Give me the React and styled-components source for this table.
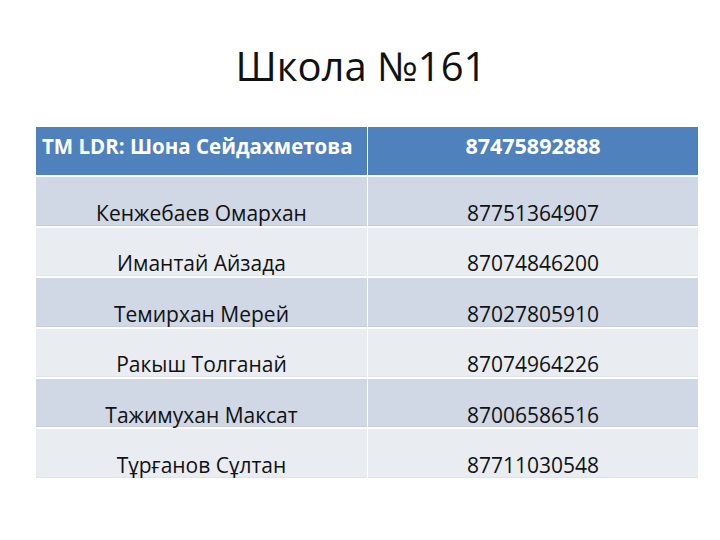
import { Fragment } from "react";
import styled, { createGlobalStyle } from "styled-components";

const GlobalStyle = createGlobalStyle`
  html, body {
    margin: 0;
    padding: 0;
    background: #ffffff;
  }
  body {
    font-family: "Open Sans", "Liberation Sans", sans-serif;
  }
`;

const Slide = styled.div`
  width: 720px;
  height: 540px;
  background: #ffffff;
  display: flex;
  flex-direction: column;
  align-items: center;
  padding-top: 41px;
  box-sizing: border-box;
`;

const Title = styled.h1`
  margin: 0 0 36px 0;
  font-size: 40px;
  line-height: 50px;
  font-weight: 400;
  color: #111111;
  padding-left: 2px;
`;

const Table = styled.div`
  width: 662px;
  margin-left: 14px;
  display: grid;
  grid-template-columns: 331px 330px;
  grid-auto-rows: 48.4px;
  column-gap: 1px;
  row-gap: 2px;
  background: #ffffff;
`;

const HeadCell = styled.div`
  background: #4f81bd;
  color: #ffffff;
  font-weight: 700;
  font-size: ${(p) => (p.$left ? "20.5px" : "21.5px")};
  display: flex;
  align-items: center;
  justify-content: ${(p) => (p.$left ? "flex-start" : "center")};
  padding: 0 0 11px ${(p) => (p.$left ? "6px" : "0")};
  box-sizing: border-box;
  white-space: nowrap;
`;

const Cell = styled.div`
  background: ${(p) => (p.$odd ? "#d0d7e5" : "#e9edf2")};
  box-shadow: inset 0 -1px 0 ${(p) => (p.$odd ? "#c6cbe0" : "#dfe3ec")};
  color: #111111;
  font-size: 21px;
  display: flex;
  align-items: center;
  justify-content: center;
  padding-top: 23px;
  box-sizing: border-box;
  white-space: nowrap;
`;

const rows = [
  ["Кенжебаев Омархан", "87751364907"],
  ["Имантай Айзада", "87074846200"],
  ["Темирхан Мерей", "87027805910"],
  ["Ракыш Толганай", "87074964226"],
  ["Тажимухан Максат", "87006586516"],
  ["Тұрғанов Сұлтан", "87711030548"],
];

const App = () => {
  return (
    <>
      <GlobalStyle />
      <Slide>
        <Title>Школа №161</Title>
        <Table>
          <HeadCell $left>ТМ LDR: Шона Сейдахметова</HeadCell>
          <HeadCell>87475892888</HeadCell>
          {rows.map(([name, phone], i) => (
            <Fragment key={phone}>
              <Cell $odd={i % 2 === 0}>{name}</Cell>
              <Cell $odd={i % 2 === 0}>{phone}</Cell>
            </Fragment>
          ))}
        </Table>
      </Slide>
    </>
  );
};

export default App;
